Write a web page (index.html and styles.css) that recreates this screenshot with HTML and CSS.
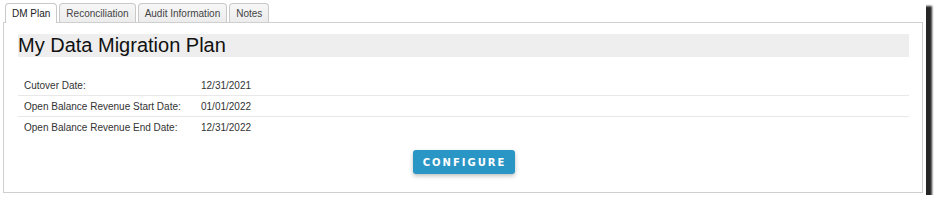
FILE: index.html
```html
<!DOCTYPE html>
<html lang="en">
<head>
    <meta charset="UTF-8">
    <title>DM Plan</title>
    <link rel="stylesheet" href="styles.css">
</head>
<body>
    <div class="frame">
        <div class="tabs">
            <div class="tab active">DM Plan</div>
            <div class="tab">Reconciliation</div>
            <div class="tab">Audit Information</div>
            <div class="tab">Notes</div>
        </div>
        <div class="panel">
            <h1 class="title">My Data Migration Plan</h1>
            <div class="details">
                <div class="row">
                    <span class="label">Cutover Date:</span>
                    <span class="value">12/31/2021</span>
                </div>
                <div class="row">
                    <span class="label">Open Balance Revenue Start Date:</span>
                    <span class="value">01/01/2022</span>
                </div>
                <div class="row">
                    <span class="label">Open Balance Revenue End Date:</span>
                    <span class="value">12/31/2022</span>
                </div>
            </div>
            <div class="actions">
                <button class="configure">Configure</button>
            </div>
        </div>
    </div>
</body>
</html>
```

FILE: styles.css
```css
body {
    margin: 0;
    background: #fff;
    font-family: 'Liberation Sans', Arial, sans-serif;
    color: #222;
}
.frame {
    width: 926px;
    height: 195px;
    box-sizing: border-box;
    padding: 3px 3px 0 3px;
    background: #fff;
    box-shadow: 6px 6px 2px rgba(0, 0, 0, 0.85);
}
.tabs {
    display: flex;
    gap: 2px;
    padding-left: 2px;
    height: 19px;
}
.tab {
    height: 19px;
    box-sizing: border-box;
    padding: 0 6px;
    border: 1px solid #c9c9c9;
    border-bottom: none;
    border-radius: 4px 4px 0 0;
    background: linear-gradient(#f7f7f7, #ececec);
    font-size: 10px;
    line-height: 19px;
    color: #444;
}
.tab.active {
    background: #fff;
    color: #222;
    height: 20px;
    position: relative;
    z-index: 1;
}
.panel {
    width: 920px;
    height: 171px;
    box-sizing: border-box;
    border: 1px solid #cfcfcf;
    padding: 11px 13px 0 14px;
}
.title {
    margin: 0;
    height: 23px;
    background: #eee;
    font-size: 20px;
    font-weight: normal;
    line-height: 23px;
    color: #111;
}
.details {
    margin-top: 18px;
}
.row {
    display: flex;
    height: 20px;
    align-items: center;
    padding-left: 6px;
    font-size: 10px;
    color: #333;
}
.row + .row {
    border-top: 1px solid #e8e8e8;
}
.label {
    width: 177px;
}
.actions {
    display: flex;
    justify-content: center;
    margin-top: 13px;
}
.configure {
    width: 102px;
    height: 24px;
    border: none;
    border-radius: 3px;
    background: #2a96c6;
    color: #fff;
    font-family: 'DejaVu Sans', Verdana, sans-serif;
    font-weight: bold;
    font-size: 10px;
    letter-spacing: 2px;
    text-transform: uppercase;
    box-shadow: 0 2px 4px rgba(0, 0, 0, 0.25);
    padding: 0 0 0 2px;
}
```
